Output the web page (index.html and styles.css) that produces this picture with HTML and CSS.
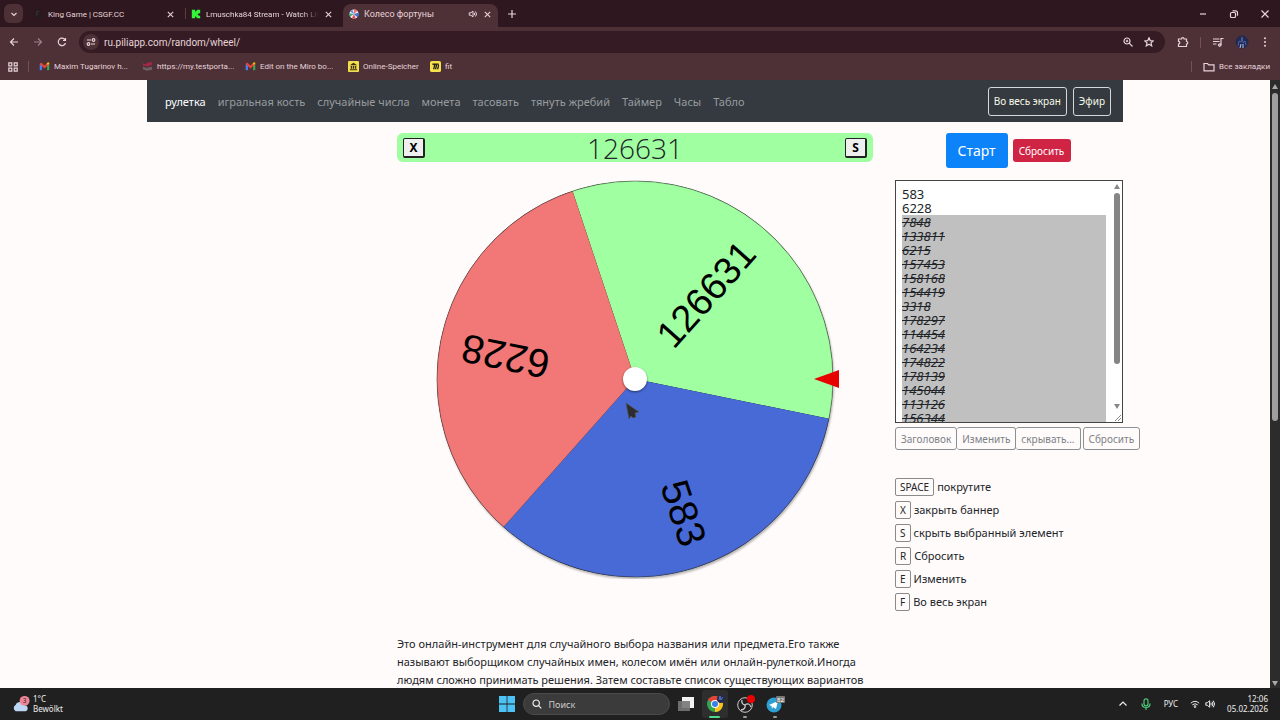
FILE: index.html
```html
<!DOCTYPE html>
<html lang="ru">
<head>
  <meta charset="UTF-8">
  <meta name="viewport" content="width=device-width, initial-scale=1.0">
  <title>Колесо фортуны</title>
  <link rel="stylesheet" href="styles.css">
</head>
<body>
  <!-- shared icons -->
  <svg class="defs" aria-hidden="true">
    <symbol id="close" viewBox="0 0 10 10"><path d="M2 2l6 6M8 2l-6 6"/></symbol>
    <symbol id="gmail" viewBox="0 0 12 10">
      <path d="M2 9V2" stroke="#4285f4" stroke-width="2.4"/>
      <path d="M10 9V2" stroke="#34a853" stroke-width="2.4"/>
      <path d="M1.5 1.5L6 5.5l4.5-4" stroke="#ea4335" stroke-width="2.4"/>
      <path d="M9 2.5l1.800-1.600" stroke="#fbbc04" stroke-width="2"/>
    </symbol>
  </svg>

  <div class="tab-strip">
    <button class="tab-search" aria-label="Поиск вкладок"><svg class="icon" viewBox="0 0 10 10"><path d="M2.500 4L5 6.500 7.500 4"/></svg></button>
    <div class="tab">
      <svg class="favicon" viewBox="0 0 12 12"><path d="M2 1h8v10H2z" fill="#231a1e"/><path d="M4 3h4M4 6h3M4 3v6" stroke="#40333a"/></svg>
      <span class="tab-title">King Game | CSGF.CC</span>
      <button class="tab-close" aria-label="Закрыть"><svg class="icon"><use href="#close"/></svg></button>
    </div>
    <div class="tab tab-divided">
      <svg class="favicon" viewBox="0 0 12 12"><path d="M1 1h4v2h1V2h1V1h4v4H9v1H8v1h1v1h2v3H7v-1H6V9H5v2H1z" fill="#35f53a"/></svg>
      <span class="tab-title fade">Lmuschka84 Stream - Watch Liv</span>
      <button class="tab-close" aria-label="Закрыть"><svg class="icon"><use href="#close"/></svg></button>
    </div>
    <div class="tab active">
      <svg class="favicon" viewBox="0 0 12 12">
        <circle cx="6" cy="6" r="5.500" fill="#eee"/>
        <path d="M6 6V.5A5.500 5.500 0 0 1 10 2z" fill="#ef6a74"/>
        <path d="M6 6l5.500-1.500A5.500 5.500 0 0 1 10 10z" fill="#3b6fd0"/>
        <path d="M6 6l2 5.200A5.500 5.500 0 0 1 3.500 11z" fill="#e34b5d"/>
        <path d="M6 6L1.500 9A5.500 5.500 0 0 1 .5 5z" fill="#3cae7a"/>
        <path d="M6 6L1.500 3A5.500 5.500 0 0 1 4 1z" fill="#5c83dd"/>
      </svg>
      <span class="tab-title">Колесо фортуны</span>
      <svg class="icon" viewBox="0 0 12 12"><path d="M1.500 4.500h2L6 2.500v7l-2.500-2h-2zM7.500 4.500q1.200 1.500 0 3M9 3q2.500 3 0 6"/></svg>
      <button class="tab-close" aria-label="Закрыть"><svg class="icon"><use href="#close"/></svg></button>
    </div>
    <button class="new-tab" aria-label="Новая вкладка"><svg class="icon" viewBox="0 0 10 10"><path d="M5 1v8M1 5h8"/></svg></button>
    <div class="window-controls">
      <button aria-label="Свернуть"><svg class="icon" viewBox="0 0 10 10"><path d="M2 5h6"/></svg></button>
      <button aria-label="Восстановить"><svg class="icon" viewBox="0 0 10 10"><rect x="1.500" y="3.500" width="5" height="5" rx="1"/><path d="M3.500 1.800h3a2 2 0 0 1 2 2v3"/></svg></button>
      <button aria-label="Закрыть окно"><svg class="icon" viewBox="0 0 10 10"><path d="M1.500 1.500l7 7M8.500 1.500l-7 7"/></svg></button>
    </div>
  </div>

  <div class="toolbar">
    <div class="nav-buttons">
      <button aria-label="Назад"><svg class="icon" viewBox="0 0 10 10"><path d="M9 5H1.500M5 1.500L1.500 5 5 8.500"/></svg></button>
      <button aria-label="Вперёд" class="dim"><svg class="icon" viewBox="0 0 10 10"><path d="M1 5h7.500M5 1.500L8.500 5 5 8.500"/></svg></button>
      <button aria-label="Обновить"><svg class="icon" viewBox="0 0 10 10"><path d="M8.500 6A3.700 3.700 0 1 1 8 2.800M8.500 1v2.500H6"/></svg></button>
    </div>
    <div class="omnibox">
      <span class="site-info"><svg class="icon" viewBox="0 0 10 10"><path d="M1 3h4M5 7h4"/><circle cx="7.500" cy="3" r="1.300"/><circle cx="2.500" cy="7" r="1.300"/></svg></span>
      <input type="text" class="url" aria-label="Адрес" value="ru.piliapp.com/random/wheel/">
      <svg class="icon" viewBox="0 0 10 10"><circle cx="4" cy="4" r="3"/><path d="M6.200 6.200L9.500 9.500M2.800 4h2.400M4 2.800v2.400"/></svg>
      <svg class="icon" viewBox="0 0 10 10"><path d="M5 .8l1.200 2.800 3 .3L7 5.900l.7 3L5 7.300 2.300 8.900l.7-3L.8 3.900l3-.3z"/></svg>
    </div>
    <div class="toolbar-right">
      <svg class="icon large" viewBox="0 0 12 12"><path d="M1.500 3h3a1.300 1.300 0 0 1 2.600 0H9.500v2.500a1.300 1.300 0 0 1 0 2.600v2.400h-8V8a1.300 1.300 0 0 0 0-2.600z"/></svg>
      <span class="separator"></span>
      <svg class="icon large" viewBox="0 0 12 12"><path d="M1 3h6.500M1 5.500h6.500M1 8h3.500M9 9V2.500h2.500"/><circle cx="7.800" cy="9" r="1.200"/></svg>
      <svg class="avatar" viewBox="0 0 14 14"><circle cx="7" cy="7" r="6.500" fill="#23294f"/><path d="M3 11l1-5 2 1 1-5 1 6 2-2 1 4" stroke="#4a62a8" fill="none"/><path d="M5 13l1-4M8 13V9" stroke="#b6c8ec"/></svg>
      <svg class="icon" viewBox="0 0 10 10"><g fill="currentColor" stroke="none"><circle cx="5" cy="1.300" r="1"/><circle cx="5" cy="5" r="1"/><circle cx="5" cy="8.700" r="1"/></g></svg>
    </div>
  </div>

  <div class="bookmarks">
    <svg class="icon" viewBox="0 0 10 10"><path d="M.8.800h3v3h-3zM6.200.800h3v3h-3zM.8 6.200h3v3h-3zM6.200 6.200h3v3h-3z"/></svg>
    <span class="separator"></span>
    <a href="#" class="wide"><svg class="mark"><use href="#gmail"/></svg>Maxim Tugarinov h...</a>
    <a href="#" class="wide"><svg class="mark" viewBox="0 0 12 10"><path d="M1 1.500l3 1 2-1.500 5-1v3L6 5 1 4z" fill="#a32847"/><path d="M1 5l4 1.500 6-1.500v3.500L5 9.500 1 8z" fill="#6d6065"/></svg>https://my.testporta...</a>
    <a href="#" class="wide"><svg class="mark"><use href="#gmail"/></svg>Edit on the Miro bo...</a>
    <a href="#" class="medium"><svg class="mark" viewBox="0 0 12 12"><rect width="12" height="12" rx="1" fill="#f3df4d"/><path d="M2 4.500L6 2l4 2.500zM3 5.500h1.500v3H3zM5.300 5.500h1.400v3H5.300zM7.500 5.500H9v3H7.500zM2 9h8v1H2z" fill="#3b2c14"/></svg>Online-Speicher</a>
    <a href="#"><svg class="mark" viewBox="0 0 12 12"><rect width="12" height="12" rx="2" fill="#f7e14c"/><path d="M2.500 3.500H9.500M4 3l1 2-1 4M6 3l1 2-1 4M8.500 3l.8 2-1 4" stroke="#221b16" stroke-width="1.400" fill="none"/></svg>fit</a>
    <div class="all-bookmarks">
      <span class="separator"></span>
      <a href="#"><svg class="icon folder" viewBox="0 0 12 10"><path d="M1 1.500h3.500l1.200 1.300H11v6H1z"/></svg>Все закладки</a>
    </div>
  </div>

  <div class="viewport">
    <div class="page">
      <div class="container">
        <nav class="navbar">
          <a href="#" class="current">рулетка</a>
          <a href="#">игральная кость</a>
          <a href="#">случайные числа</a>
          <a href="#">монета</a>
          <a href="#">тасовать</a>
          <a href="#">тянуть жребий</a>
          <a href="#">Таймер</a>
          <a href="#">Часы</a>
          <a href="#">Табло</a>
          <div class="nav-actions">
            <button>Во весь экран</button>
            <button>Эфир</button>
          </div>
        </nav>

        <div class="content">
          <main>
            <div class="banner">
              <button>X</button>
              <span>126631</span>
              <button>S</button>
            </div>
            <div class="wheel">
              <svg viewBox="-205 -200 410 400">
                <circle class="wheel-base" r="198"/>
                <path fill="#a0ffa0" d="M0 0L-62.500-187.900A198 198 0 0 1 194 39.800z"/>
                <path fill="#486ad6" d="M0 0L194 39.800A198 198 0 0 1-131.500 148.100z"/>
                <path fill="#f27777" d="M0 0L-131.500 148.100A198 198 0 0 1-62.500-187.900z"/>
                <circle class="wheel-rim" r="198"/>
                <g class="wheel-labels">
                  <text class="long" x="174" y="10" transform="rotate(-48.4)">126631</text>
                  <text x="176" y="10" transform="rotate(71.6)">583</text>
                  <text x="176" y="10" transform="rotate(191.6)">6228</text>
                </g>
                <circle class="hub" r="12"/>
                <path class="pointer" d="M179 0l25-9V9z"/>
              </svg>
              <svg class="cursor" viewBox="0 0 16 18"><path d="M1 1l13 9-4 1 1 4-3 1-2-2-2 3z" fill="#2d2d2f" stroke="#55555c" stroke-width=".7"/></svg>
            </div>
            <p>Это онлайн-инструмент для случайного выбора названия или предмета.Его также<br>
              называют выборщиком случайных имен, колесом имён или онлайн-рулеткой.Иногда<br>
              людям сложно принимать решения. Затем составьте список существующих вариантов</p>
          </main>

          <aside>
            <div class="controls">
              <button class="start">Старт</button>
              <button class="reset">Сбросить</button>
            </div>
            <div class="list-box">
              <div class="entries" contenteditable="true" role="textbox" aria-multiline="true" aria-label="Список" spellcheck="false">
                <div>583</div>
                <div>6228</div>
                <div class="hidden-entry">7848</div>
                <div class="hidden-entry">133811</div>
                <div class="hidden-entry">6215</div>
                <div class="hidden-entry">157453</div>
                <div class="hidden-entry">158168</div>
                <div class="hidden-entry">154419</div>
                <div class="hidden-entry">3318</div>
                <div class="hidden-entry">178297</div>
                <div class="hidden-entry">114454</div>
                <div class="hidden-entry">164234</div>
                <div class="hidden-entry">174822</div>
                <div class="hidden-entry">178139</div>
                <div class="hidden-entry">145044</div>
                <div class="hidden-entry">113126</div>
                <div class="hidden-entry">156344</div>
              </div>
              <div class="list-scroll">
                <span class="arrow-up"></span>
                <span class="thumb"></span>
                <span class="arrow-down"></span>
                <svg class="grip" viewBox="0 0 10 10"><path d="M3 9l6-6M6 9l3-3" stroke="#888" fill="none"/></svg>
              </div>
            </div>
            <div class="list-actions">
              <div class="group">
                <button>Заголовок</button>
                <button>Изменить</button>
                <button>скрывать...</button>
              </div>
              <button>Сбросить</button>
            </div>
            <ul class="shortcuts">
              <li><kbd>SPACE</kbd>покрутите</li>
              <li><kbd>X</kbd>закрыть баннер</li>
              <li><kbd>S</kbd>скрыть выбранный элемент</li>
              <li><kbd>R</kbd>Сбросить</li>
              <li><kbd>E</kbd>Изменить</li>
              <li><kbd>F</kbd>Во весь экран</li>
            </ul>
          </aside>
        </div>
      </div>
    </div>
    <div class="page-scroll">
      <span class="arrow-up"></span>
      <span class="thumb"></span>
      <span class="arrow-down"></span>
    </div>
  </div>

  <footer class="taskbar">
    <div class="weather">
      <svg viewBox="0 0 20 18">
        <path d="M4 17a4 4 0 0 1 0-7 5.500 5.500 0 0 1 10 0 3.600 3.600 0 0 1 1 7z" fill="#bcd6f5"/>
        <circle cx="14" cy="5.500" r="5.500" fill="#f08497"/>
        <text x="14" y="8">3</text>
      </svg>
      <div>1°C<br>Bewölkt</div>
    </div>
    <div class="apps">
      <svg class="start-logo" viewBox="0 0 16 16"><path d="M0 0h7.600v7.600H0zM8.400 0H16v7.600H8.400zM0 8.400h7.600V16H0zM8.400 8.400H16V16H8.400z" fill="#4cc2f5"/></svg>
      <label class="search">
        <svg class="icon" viewBox="0 0 10 10"><circle cx="4.200" cy="4.200" r="3.200"/><path d="M6.600 6.600L9.300 9.300"/></svg>
        <input type="text" placeholder="Поиск" aria-label="Поиск">
      </label>
      <svg class="task-view" viewBox="0 0 16 16"><rect x="4" y="1" width="12" height="11" fill="#f2f2f2"/><rect y="5" width="12" height="10" fill="#777" opacity=".9"/></svg>
      <div class="running">
        <div class="app open">
          <svg viewBox="0 0 20 20">
            <circle cx="10" cy="10" r="8" fill="#31a650"/>
            <path d="M10 10L3.100 6A8 8 0 0 1 16.900 6z" fill="#e94235"/>
            <path d="M10 10L16.900 6A8 8 0 0 1 10 18z" fill="#fbc116"/>
            <circle cx="10" cy="10" r="4" fill="#fff"/><circle cx="10" cy="10" r="3" fill="#3d7de8"/>
            <circle cx="16" cy="5" r="4" fill="#22294f"/><path d="M14 6l1-4 1 4 2-3" stroke="#5b76bc" fill="none"/>
          </svg>
        </div>
        <div class="app">
          <svg viewBox="0 0 20 20"><circle cx="10" cy="11" r="7.300" fill="#211f20" stroke="#ccc"/><path d="M10 11q-4-1-3-5M10 11q4-3 6 2M10 11q1 4-4 5" stroke="#ccc" stroke-width="1.300" fill="none"/><circle cx="16" cy="5" r="4" fill="#f00000"/></svg>
        </div>
        <div class="app">
          <svg viewBox="0 0 20 20"><circle cx="9" cy="11" r="7.500" fill="#2d9fd3"/><path d="M4 11l9-4-2 8-3-2-1 2-.5-3z" fill="#fff"/><rect x="11" y="2" width="9" height="7" rx="1" fill="#777"/><text x="15.500" y="8">82</text></svg>
        </div>
      </div>
    </div>
    <div class="tray">
      <svg class="icon" viewBox="0 0 10 10"><path d="M1.500 6.500L5 3l3.500 3.500"/></svg>
      <svg class="icon mic" viewBox="0 0 12 12"><rect x="4" y=".8" width="4" height="7" rx="2"/><path d="M2 5.500q0 4 4 4t4-4M6 9.500V12"/></svg>
      <span class="lang">РУС</span>
      <div class="status">
        <svg class="icon" viewBox="0 0 12 12"><path d="M1 5q5-4.500 10 0M2.800 7Q6 4.300 9.200 7M4.500 8.700q1.500-1.200 3 0"/><circle cx="6" cy="9.800" r=".6"/></svg>
        <svg class="icon" viewBox="0 0 12 12"><path d="M1 4.500h2L5.500 2v8L3 7.500H1zM7 4.500q1 1.500 0 3M8.500 3.200q2 2.800 0 5.600M10 2q3 4 0 8"/></svg>
      </div>
      <div class="clock">12:06<br>05.02.2026</div>
    </div>
  </footer>
</body>
</html>
```
FILE: styles.css
```css
* {
  box-sizing: border-box;
}

body {
  margin: 0;
  height: 100vh;
  display: flex;
  flex-direction: column;
  overflow: hidden;
  background-color: #fffbfa;
  color: #212529;
  font-family: "Noto Sans", "Open Sans", sans-serif;
  font-size: 11px;
}

button,
input {
  font-family: inherit;
  padding: 0;
  border: none;
  background: none;
  color: inherit;
}

a {
  color: inherit;
  text-decoration: none;
}

.defs {
  position: absolute;
  width: 0;
  height: 0;
}

.icon {
  width: 10px;
  height: 10px;
  flex: none;
  display: block;
  fill: none;
  stroke: currentColor;
  stroke-width: 1.2;
}

.icon.large {
  width: 12px;
  height: 12px;
}

.separator {
  width: 1px;
  height: 11px;
  background-color: #745159;
}

/* browser window */
.tab-strip,
.toolbar,
.bookmarks {
  display: flex;
  align-items: center;
  flex: none;
  background-color: #4e3037;
  color: #e6d4d8;
  font-family: Roboto, "Noto Sans", sans-serif;
  font-size: 8px;
}

.tab-strip {
  height: 27px;
  padding-left: 4px;
  background-color: #2e171e;
}

.tab-search {
  display: grid;
  place-items: center;
  width: 19px;
  height: 19px;
  margin-right: 4px;
  border-radius: 6px;
  background-color: #4e3037;
}

.tab {
  display: flex;
  align-items: center;
  gap: 5px;
  width: 158px;
  height: 23px;
  padding: 0 10px 3px 6px;
  align-self: flex-end;
}

.tab-divided {
  background: linear-gradient(#5c3b44, #5c3b44) 0 4px / 1px 11px no-repeat;
}

.tab.active {
  width: 155px;
  padding-right: 6px;
  border-radius: 8px 8px 0 0;
  background-color: #4e3037;
  font-size: 9px;
}

.favicon {
  width: 10px;
  height: 10px;
  flex: none;
}

.tab-title {
  flex: 1;
  overflow: hidden;
  white-space: nowrap;
}

.tab-title.fade {
  mask-image: linear-gradient(to right, #000 85%, transparent);
}

.tab-close .icon {
  width: 9px;
  height: 9px;
}

.new-tab {
  margin-left: 9px;
}

.window-controls {
  display: flex;
  gap: 21px;
  margin-left: auto;
  padding-right: 10px;
}

.toolbar {
  height: 30px;
  padding: 0 10px 0 9px;
}

.nav-buttons {
  display: flex;
  gap: 14px;
  margin-right: 12px;
}

.dim {
  opacity: 0.5;
}

.omnibox {
  flex: 1;
  display: flex;
  align-items: center;
  gap: 11px;
  height: 22px;
  padding: 0 11px 0 4px;
  border-radius: 11px;
  background-color: #351c24;
}

.site-info {
  display: grid;
  place-items: center;
  width: 16px;
  height: 16px;
  margin-right: -6px;
  border-radius: 50%;
  background-color: #4e3037;
}

.url {
  flex: 1;
  min-width: 0;
  font-size: 10px;
}

.toolbar-right {
  display: flex;
  align-items: center;
  gap: 11px;
  padding-left: 12px;
}

.avatar {
  width: 14px;
  height: 14px;
}

.bookmarks {
  gap: 10px;
  height: 23px;
  padding: 0 10px 4px 8px;
}

.bookmarks a {
  display: flex;
  align-items: center;
  gap: 4px;
  white-space: nowrap;
}

.bookmarks .wide {
  width: 93px;
}

.bookmarks .medium {
  width: 72px;
}

.mark {
  width: 11px;
  height: 11px;
  flex: none;
  fill: none;
}

.all-bookmarks {
  display: flex;
  align-items: center;
  gap: 11px;
  margin-left: auto;
}

.icon.folder {
  width: 12px;
}

.viewport {
  flex: 1;
  min-height: 0;
  display: flex;
}

.page {
  flex: 1;
  overflow: hidden;
}

/* page */
.container {
  max-width: 976px;
  margin: 0 auto;
}

.navbar {
  display: flex;
  align-items: center;
  gap: 12px;
  height: 42px;
  padding: 0 12px 0 18px;
  background-color: #343a40;
  color: #999c9f;
  white-space: nowrap;
}

.navbar .current {
  color: #fff;
}

.nav-actions {
  display: flex;
  gap: 6px;
  margin-left: auto;
}

.nav-actions button {
  height: 29px;
  padding: 0 5px;
  border: 1px solid #d5d8da;
  border-radius: 3px;
  color: #f8f9e8;
  font-size: 10px;
}

.content {
  display: grid;
  grid-template-columns: 476px 228px;
  justify-content: end;
  column-gap: 22px;
  padding-top: 11px;
}

.banner {
  display: flex;
  align-items: center;
  justify-content: space-between;
  height: 29px;
  padding: 0 6px;
  border-radius: 6px;
  background-color: #a0ffa0;
}

.banner span {
  font-family: "Open Sans", "Noto Sans", sans-serif;
  font-size: 28px;
  font-weight: 300;
  line-height: 32px;
}

.banner button {
  width: 22px;
  height: 20px;
  border: 1px solid #222;
  border-right-width: 2px;
  border-bottom-width: 2px;
  border-radius: 2px;
  background-color: #efefef;
  color: #000;
  font-size: 12px;
  font-weight: bold;
  line-height: 18px;
}

.wheel {
  position: relative;
  width: 410px;
  height: 400px;
  margin: 17px auto 56px;
}

.wheel svg {
  display: block;
}

.wheel-base {
  filter: drop-shadow(1px 2px 1px rgba(0, 0, 0, 0.3));
}

.wheel-rim {
  fill: none;
  stroke: #333;
  stroke-width: 0.5;
}

.wheel-labels {
  font-family: "Liberation Sans", Arial, sans-serif;
  font-size: 40px;
  text-anchor: end;
  fill: #000;
}

.wheel-labels .long {
  font-size: 38px;
}

.hub {
  fill: #fff;
  filter: drop-shadow(0 1px 1px rgba(0, 0, 0, 0.5));
}

.pointer {
  fill: #e60000;
}

.cursor {
  position: absolute;
  left: 195px;
  top: 223px;
  width: 16px;
  height: 18px;
}

main p {
  margin: 0;
  line-height: 18px;
  white-space: nowrap;
}

.controls {
  display: flex;
  align-items: center;
  justify-content: center;
  gap: 5px;
  margin-bottom: 12px;
  padding-right: 2px;
}

.controls button {
  color: #fff;
  border-radius: 3px;
}

.start {
  width: 62px;
  height: 35px;
  background-color: #0d83fa;
  font-size: 14px;
}

.reset {
  width: 58px;
  height: 23px;
  background-color: #d02445;
  font-size: 10px;
}

.list-box {
  display: flex;
  height: 243px;
  border: 1px solid #444;
  background-color: #fff;
}

.entries {
  flex: 1;
  overflow: hidden;
  padding: 6px 5px 0 6px;
  font-size: 13px;
  line-height: 14px;
  outline: none;
}

.hidden-entry {
  background-color: #c0c0c0;
  font-style: italic;
  text-decoration: line-through;
}

.list-scroll,
.page-scroll {
  display: flex;
  flex-direction: column;
  align-items: center;
  width: 11px;
}

.arrow-up,
.arrow-down {
  border: 3px solid transparent;
}

.arrow-up {
  border-top: none;
  border-bottom: 5px solid #888;
}

.arrow-down {
  margin-top: auto;
  border-bottom: none;
  border-top: 5px solid #888;
}

.list-scroll .arrow-up {
  margin: 3px 0 4px;
}

.list-scroll .thumb {
  width: 6px;
  height: 71%;
  border-radius: 3px;
  background-color: #858585;
}

.grip {
  width: 10px;
  height: 10px;
  margin-top: 3px;
}

.list-actions {
  display: flex;
  gap: 2px;
  margin-top: 4px;
}

.group {
  display: flex;
}

.list-actions button {
  height: 23px;
  padding: 0 5px;
  border: 1px solid #8b9095;
  border-radius: 3px;
  color: #7c8186;
  font-size: 10px;
  white-space: nowrap;
}

.group button + button {
  border-left: none;
}

.shortcuts {
  display: flex;
  flex-direction: column;
  gap: 5px;
  list-style: none;
  margin: 28px 0 0;
  padding: 0;
}

.shortcuts li {
  display: flex;
  align-items: center;
  gap: 3px;
  line-height: 18px;
}

kbd {
  height: 18px;
  padding: 0 4px;
  border: 1px solid #8a8a8a;
  border-radius: 2px;
  font-family: inherit;
  font-size: 10px;
  line-height: 16px;
}

.page-scroll {
  width: 10px;
  background-color: #2c2c2c;
}

.page-scroll .arrow-up {
  margin: 4px 0;
  border-bottom-color: #aaa;
}

.page-scroll .arrow-down {
  margin-bottom: 2px;
  border-top-color: #aaa;
}

.page-scroll .thumb {
  width: 6px;
  height: 54%;
  border-radius: 3px;
  background-color: #9f9f9f;
}

/* taskbar */
.taskbar {
  display: grid;
  grid-template-columns: 1fr auto 1fr;
  align-items: center;
  height: 32px;
  flex: none;
  padding: 0 12px;
  background-color: #202020;
  color: #eee;
  font-size: 8px;
  line-height: 10px;
}

.taskbar text {
  font-size: 7px;
  text-anchor: middle;
  fill: #222;
}

.weather {
  display: flex;
  align-items: center;
  gap: 3px;
}

.weather svg {
  width: 18px;
  height: 18px;
}

.apps {
  display: flex;
  align-items: center;
  gap: 8px;
  padding-left: 6px;
}

.start-logo,
.task-view {
  width: 16px;
  height: 16px;
}

.search {
  display: flex;
  align-items: center;
  gap: 7px;
  width: 147px;
  height: 22px;
  padding: 0 8px;
  border: 1px solid #4a4a4a;
  border-radius: 11px;
  background-color: #3b3b3b;
}

.search input {
  flex: 1;
  min-width: 0;
  font-size: 9px;
}

.search input::placeholder {
  color: #ccc;
}

.running {
  display: flex;
  gap: 4px;
}

.app {
  position: relative;
  display: grid;
  place-items: center;
  width: 26px;
  height: 28px;
}

.app svg {
  width: 20px;
  height: 20px;
}

.app::after {
  content: "";
  position: absolute;
  bottom: 0;
  width: 4px;
  height: 2px;
  border-radius: 1px;
  background-color: #999;
}

.app.open {
  border-radius: 3px;
  background-color: #2e2e2e;
}

.app.open::after {
  width: 11px;
  background-color: #4fd98b;
}

.app text {
  font-size: 6px;
  fill: #fff;
}

.tray {
  display: flex;
  align-items: center;
  justify-content: flex-end;
  gap: 12px;
}

.mic {
  width: 12px;
  height: 12px;
  color: #4fc97c;
}

.status {
  display: flex;
  gap: 5px;
}

.clock {
  text-align: right;
}
```
